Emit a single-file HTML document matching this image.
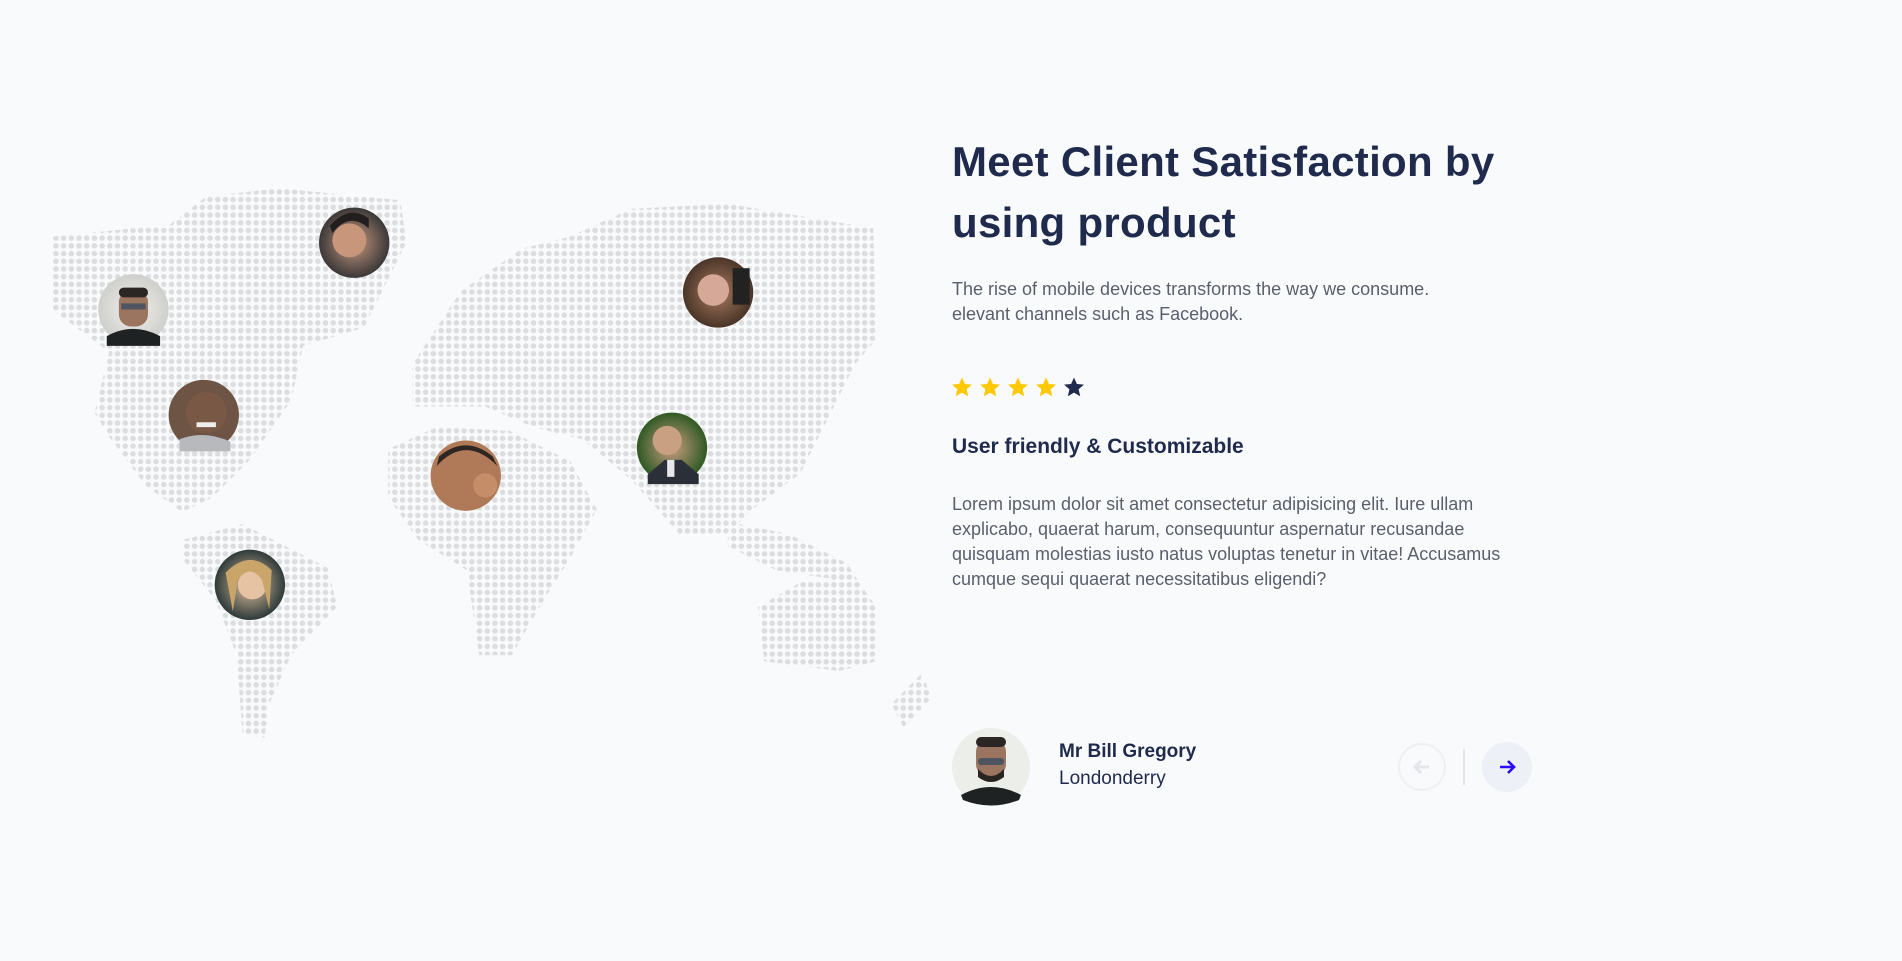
<!DOCTYPE html>
<html><head><meta charset="utf-8"><style>
html,body{margin:0;padding:0;background:#f9fafc;width:1902px;height:961px;overflow:hidden;font-family:"Liberation Sans",sans-serif}
svg.map{position:absolute;left:0;top:0}
h1{position:absolute;left:952px;top:131px;margin:0;font-size:42px;line-height:61px;font-weight:700;color:#1f2a4c;letter-spacing:0.3px;white-space:nowrap}
.p{position:absolute;left:952px;font-size:18px;line-height:25px;color:#5a5f6b;white-space:nowrap}
.h3{position:absolute;left:952px;top:435px;font-size:21px;font-weight:700;color:#1f2a4c}
.btn{position:absolute;width:48px;height:48px;border-radius:50%;box-sizing:border-box}
</style></head><body>
<svg class="map" width="1902" height="961" viewBox="0 0 1568 792">
<defs>
<pattern id="d" width="6.35" height="6.35" patternUnits="userSpaceOnUse" x="43" y="155"><circle cx="3.1" cy="3.1" r="2.3" fill="#dcdddf"/></pattern>
<clipPath id="c">
<polygon points="43,195 140,185 170,162 230,155 330,165 335,200 300,270 250,285 240,330 205,380 175,410 150,422 120,400 90,360 78,340 90,290 43,255"/>
<polygon points="150,445 200,432 270,468 278,500 240,540 222,580 218,608 200,605 195,540 178,495 150,460"/>
<polygon points="340,300 380,240 430,205 470,195 520,172 600,168 720,188 722,280 705,300 690,330 660,390 620,420 600,440 560,440 520,395 480,362 440,352 400,335 340,335"/>
<polygon points="320,370 360,352 420,355 470,380 492,420 470,460 445,500 422,540 395,540 385,470 345,445 320,410"/>
<polygon points="600,430 650,440 700,465 705,480 640,470 600,450"/>
<polygon points="625,500 660,480 705,475 722,500 722,545 692,553 630,545"/>
<polygon points="735,580 760,555 768,575 745,600"/>
</clipPath>
<radialGradient id="g1"><stop offset="0" stop-color="#c89a80"/><stop offset="1" stop-color="#3b3838"/></radialGradient>
<radialGradient id="g2"><stop offset="0" stop-color="#f0f0ee"/><stop offset="1" stop-color="#cfd0cc"/></radialGradient>
<radialGradient id="g3"><stop offset="0" stop-color="#a77a5e"/><stop offset="1" stop-color="#4a3528"/></radialGradient>
<radialGradient id="g4"><stop offset="0" stop-color="#c99d7f"/><stop offset="1" stop-color="#2f5a24"/></radialGradient>
<radialGradient id="g5"><stop offset="0" stop-color="#e2c2a0"/><stop offset="1" stop-color="#2e3b3a"/></radialGradient>
</defs>
<rect x="40" y="150" width="740" height="465" fill="url(#d)" clip-path="url(#c)"/>
<g transform="translate(110,255)"><circle r="29" fill="url(#g2)"/><rect x="-12" y="-16" width="24" height="30" rx="10" fill="#9b7560"/><rect x="-12" y="-18" width="24" height="8" rx="4" fill="#2b2623"/><rect x="-10" y="-5" width="20" height="5" fill="#4e5560"/><path d="M-22,22 Q0,10 22,22 L22,30 L-22,30Z" fill="#1f2222"/></g>
<g transform="translate(292,200)"><circle r="29" fill="url(#g1)"/><circle cx="-4" cy="-2" r="14" fill="#c8967a"/><path d="M-18,-8 Q-4,-26 12,-12 L12,-20 Q-4,-32 -20,-14Z" fill="#231e1e"/></g>
<g transform="translate(592,241)"><circle r="29" fill="url(#g3)"/><circle cx="-4" cy="-2" r="13" fill="#d6a898"/><rect x="12" y="-20" width="14" height="30" fill="#222"/></g>
<g transform="translate(168,342)"><circle r="29" fill="#6d5444"/><circle cx="2" cy="-2" r="17" fill="#7a5846"/><path d="M-20,20 Q0,12 22,22 L22,30 L-20,30Z" fill="#b7b9bd"/><rect x="-6" y="6" width="16" height="4" fill="#eee"/></g>
<g transform="translate(384,392)"><circle r="29" fill="#b07a58"/><path d="M-24,-8 Q0,-34 26,-8 L22,-16 Q0,-34 -22,-16Z" fill="#2e2622"/><circle cx="16" cy="8" r="10" fill="#c58e68"/></g>
<g transform="translate(554,369)"><circle r="29" fill="url(#g4)"/><circle cx="-4" cy="-6" r="12" fill="#caa083"/><path d="M-20,22 L-6,10 L8,10 L22,22 L22,30 L-20,30Z" fill="#2b2f38"/><rect x="-4" y="10" width="6" height="14" fill="#e8e8ea"/></g>
<g transform="translate(206,482)"><circle r="29" fill="url(#g5)"/><circle cx="2" cy="0" r="12" fill="#e6c3a3"/><path d="M-20,-10 Q0,-30 18,-12 L16,20 L10,-4 Q0,-18 -10,-4 L-14,22Z" fill="#c9a56a"/></g>
</svg>

<h1>Meet Client Satisfaction by<br>using product</h1>
<div class="p" style="top:277px">The rise of mobile devices transforms the way we consume.<br>elevant channels such as Facebook.</div>
<svg style="position:absolute;left:951px;top:376px" width="140" height="24" viewBox="0 0 140 24">
<g id="s"><path d="M11,1.5 L13.9,8 L21,8.6 L15.6,13.3 L17.2,20.3 L11,16.6 L4.8,20.3 L6.4,13.3 L1,8.6 L8.1,8 Z" fill="#ffc800"/></g>
<use href="#s" x="28"/><use href="#s" x="56"/><use href="#s" x="84"/>
<path transform="translate(112,0)" d="M11,1.5 L13.9,8 L21,8.6 L15.6,13.3 L17.2,20.3 L11,16.6 L4.8,20.3 L6.4,13.3 L1,8.6 L8.1,8 Z" fill="#1f2a4c"/>
</svg>
<div class="h3">User friendly &amp; Customizable</div>
<div class="p" style="top:492px">Lorem ipsum dolor sit amet consectetur adipisicing elit. Iure ullam<br>explicabo, quaerat harum, consequuntur aspernatur recusandae<br>quisquam molestias iusto natus voluptas tenetur in vitae! Accusamus<br>cumque sequi quaerat necessitatibus eligendi?</div>

<svg style="position:absolute;left:952px;top:728px" width="78" height="78" viewBox="-39 -39 78 78">
<circle r="39" fill="#eceeea"/><rect x="-15" y="-28" width="30" height="38" rx="13" fill="#9b7560"/><rect x="-15" y="-30" width="30" height="10" rx="5" fill="#2b2623"/><rect x="-13" y="-9" width="26" height="7" rx="3" fill="#4e5560"/><path d="M-13,2 Q0,16 13,2 L13,10 Q0,20 -13,10Z" fill="#2a2420"/><path d="M-30,28 Q0,12 30,28 L28,33 Q0,44 -28,33Z" fill="#1f2222"/>
</svg>
<div style="position:absolute;left:1059px;top:741px;font-size:19px;font-weight:700;color:#1f2a4c">Mr Bill Gregory</div>
<div style="position:absolute;left:1059px;top:768px;font-size:19px;color:#1f2a4c">Londonderry</div>

<div class="btn" style="left:1398px;top:743px;border:2px solid #eef0f4"></div>
<svg style="position:absolute;left:1412px;top:757px" width="20" height="20" viewBox="0 0 20 20"><path d="M17,10 H4 M9,4 L3,10 L9,16" stroke="#e3e5ea" stroke-width="3" fill="none"/></svg>
<div style="position:absolute;left:1463px;top:749px;width:2px;height:36px;background:#e4e6ea"></div>
<div class="btn" style="left:1482px;top:742px;width:50px;height:50px;background:#eef0f7"></div>
<svg style="position:absolute;left:1497px;top:757px" width="20" height="20" viewBox="0 0 20 20"><path d="M3,10 H16 M11,4 L17,10 L11,16" stroke="#2a0bff" stroke-width="2.6" fill="none"/></svg>
</body></html>
